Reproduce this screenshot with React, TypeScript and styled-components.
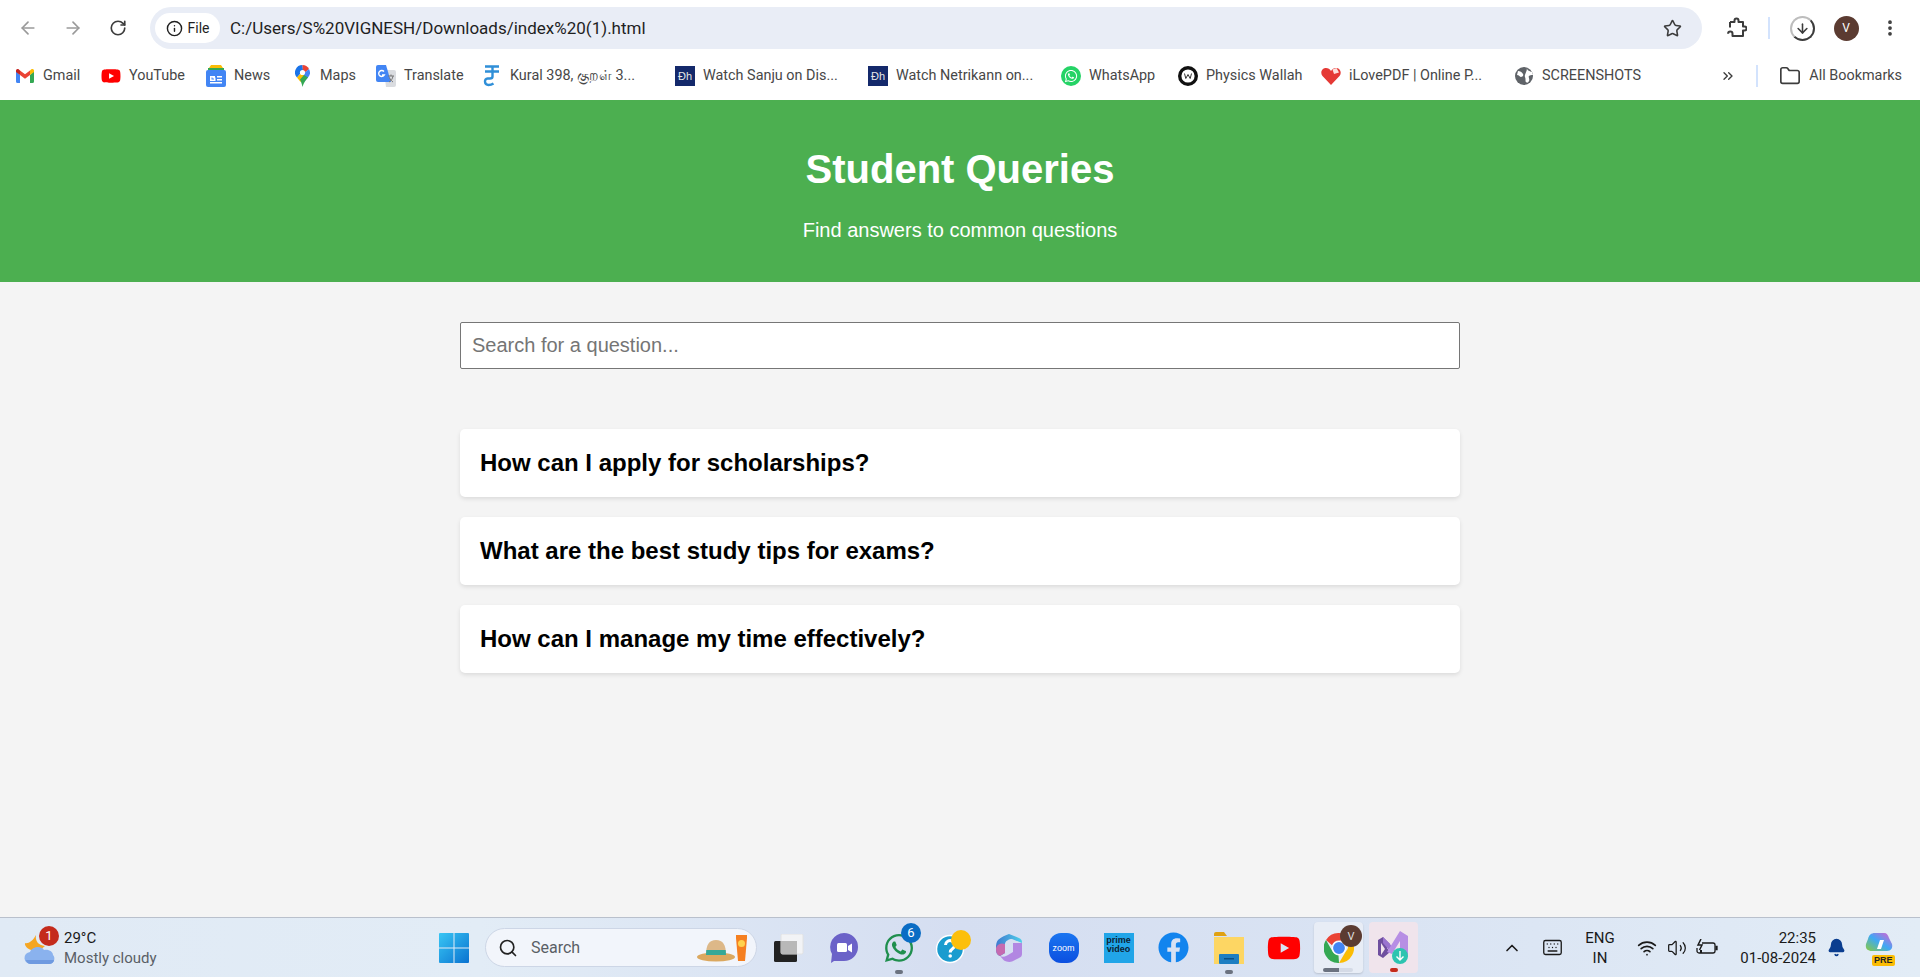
import styled, { createGlobalStyle } from "styled-components";
import {
  ArrowDown,
  ArrowLeft,
  ArrowRight,
  Bell,
  ChevronsRight,
  ChevronUp,
  EllipsisVertical,
  Folder,
  Info,
  Keyboard,
  RotateCw,
  Search,
  Star,
  Volume2,
  Wifi,
} from "lucide-react";
import { FaFacebook, FaWhatsapp, FaYoutube } from "react-icons/fa";

const GlobalStyle = createGlobalStyle`
  html, body {
    margin: 0;
    padding: 0;
    height: 100%;
    overflow: hidden;
    font-family: "Liberation Sans", Arial, sans-serif;
  }
  #root { height: 100%; }
  * { box-sizing: border-box; }
`;

const UI_FONT = `Roboto, "Noto Sans", sans-serif`;

const GmailIcon = () => (
  <svg width="18" height="14" viewBox="0 0 18 14">
    <path d="M0 2v10.5A1.5 1.5 0 0 0 1.5 14H4V6z" fill="#4285f4" />
    <path d="M18 2v10.5a1.5 1.5 0 0 1-1.5 1.5H14V6z" fill="#34a853" />
    <path d="M4 6 0 3V1.600C0 .3 1.500-.5 2.600.3L4 1.400z" fill="#c5221f" />
    <path d="M14 6V1.400L15.400.3C16.500-.5 18 .3 18 1.600V3z" fill="#fbbc04" />
    <path d="M4 6V1.400L9 5.200l5-3.800V6L9 9.800z" fill="#ea4335" />
  </svg>
);

const NewsIcon = () => (
  <svg width="20" height="22" viewBox="0 0 20 22">
    <path d="M3 3 5 0h10l2 3z" fill="#fbbc04" />
    <path d="M2 3h16v4H2z" fill="#34a853" />
    <rect y="5" width="20" height="17" rx="2" fill="#4285f4" />
    <path d="M4 11h5v1.400H5.500v2.200H8v-1H6.500v-1H9.500v3.400H4zM11 11h5v1.500h-5zM11 14h5v1.500h-5zM4 17h12v1.500H4z" fill="#fff" />
  </svg>
);

const MapsIcon = () => (
  <svg width="15" height="22" viewBox="0 0 15 22">
    <path d="M7.500 0A7.500 7.500 0 0 0 2 12.600l6-7z" fill="#1a73e8" />
    <path d="M7.500 0A7.500 7.500 0 0 1 14 4L8 9z" fill="#ea4335" />
    <path d="M14 4a7.500 7.500 0 0 1-1 8.500L9 17l-3-3 2-5z" fill="#4285f4" />
    <path d="M2 12.600 6 8l3 2-3.500 7z" fill="#fbbc04" />
    <path d="M5 14.500 9 10l4 2.600C11 15 8.600 17.600 7.500 22 7 19 6 17 5 14.500z" fill="#34a853" />
    <circle cx="7.500" cy="7.500" r="2.600" fill="#fff" />
  </svg>
);

const TranslateIcon = () => (
  <svg width="20" height="22" viewBox="0 0 20 22">
    <path d="M8 5h10a2 2 0 0 1 2 2v13a2 2 0 0 1-2 2H10z" fill="#dadce0" />
    <path d="M2 0h8l5 17H2a2 2 0 0 1-2-2V2a2 2 0 0 1 2-2z" fill="#4285f4" />
    <path d="M12 11h6M15 9.500V11M17 11c-.5 3-2 5-4 6M13.500 12.500c.6 2 2 3.600 3.500 4.500" stroke="#777" fill="none" />
    <path d="M8 6.500A3 3 0 1 0 8.300 10H6" stroke="#fff" strokeWidth="1.400" fill="none" />
  </svg>
);

const TamilIcon = () => (
  <svg width="18" height="22" viewBox="0 0 18 22">
    <path d="M2 1.500h14M2 6.500h14M9.500 1.500v10c0 1.500-1 2-2.500 2H4.500c-3.500 0-3.500 6.500 1 6.500 2 0 3.500-.5 5-1.500" stroke="#2f8fd8" strokeWidth="2.400" fill="none" />
  </svg>
);

const DisneyIcon = () => <DisneyTile>Ðh</DisneyTile>;

const ZoomIcon = () => <ZoomTile>zoom</ZoomTile>;

const WhatsAppBookmarkIcon = () => (
  <WhatsAppDisc>
    <FaWhatsapp size={14} color="#fff" />
  </WhatsAppDisc>
);

const PhysicsIcon = () => (
  <svg width="20" height="20" viewBox="0 0 20 20">
    <circle cx="10" cy="10" r="8.300" fill="#fff" stroke="#111" strokeWidth="3.400" />
    <path d="M6.500 7.500l1.300 5L10 8.500l2.200 4 1.300-5" stroke="#333" strokeWidth="1" fill="none" />
  </svg>
);

const HeartIcon = () => (
  <svg width="20" height="20" viewBox="0 0 20 20">
    <path d="M10 19 1.500 10C-1 7 .5 2 5 2c2 0 4 1 5 3 1-2 3-3 5-3 4.500 0 6 5 3.500 8z" fill="#e53935" />
    <path d="M11.500 3.500 15.500 2 18 6.500l-5 1.500z" fill="#fde0dc" />
  </svg>
);

const GlobeIcon = () => (
  <svg width="18" height="18" viewBox="0 0 18 18">
    <circle cx="9" cy="9" r="9" fill="#5f6368" />
    <path d="M3 4c2 0 4 1 5 3s-1 3-2 3-2-2-4-2zM12 1c0 3 3 3 5 4l1 3c-2 0-3 0-4 1s1 3 0 5-2 2-3 1 0-3-1-5 2-5 2-9z" fill="#fff" />
  </svg>
);

const PuzzleIcon = () => (
  <svg width="22" height="22" viewBox="0 0 22 22" fill="none" stroke="#3c3c3c" strokeWidth="2" strokeLinejoin="round">
    <path d="M4 5h4.500V3.500a2 2 0 0 1 4 0V5H17v4.500h1.500a2 2 0 0 1 0 4H17V19H6.500v-2.200a2.200 2.200 0 0 0-4.400 0" transform="translate(1 0)" />
    <path d="M5 5v5.500" />
  </svg>
);

const BatteryIcon = () => (
  <svg width="22" height="18" viewBox="0 0 22 18" fill="none" stroke="#1a1a1a" strokeWidth="1.300">
    <path d="M6 4h11a2 2 0 0 1 2 2v6a2 2 0 0 1-2 2H3a2 2 0 0 1-2-2V9" />
    <path d="M19.500 7.500H21v3h-1.500" fill="#1a1a1a" />
    <path d="M5 0 2 6h4l-2.500 5" strokeWidth="1.500" />
    <path d="M5 14v-3" strokeWidth="2" />
  </svg>
);

const WindowsIcon = () => (
  <svg width="30" height="30" viewBox="0 0 30 30">
    <defs>
      <linearGradient id="winGrad" x1="0" y1="0" x2="1" y2="1">
        <stop offset="0" stopColor="#38c6f4" />
        <stop offset="1" stopColor="#0a72d0" />
      </linearGradient>
    </defs>
    <path d="M0 1a1 1 0 0 1 1-1h13.500v14.500H0zM15.500 0H29a1 1 0 0 1 1 1v13.500H15.500zM0 15.500h14.500V30H1a1 1 0 0 1-1-1zM15.500 15.500H30V29a1 1 0 0 1-1 1H15.500z" fill="url(#winGrad)" />
  </svg>
);

const WeatherIcon = () => (
  <svg width="32" height="30" viewBox="0 0 32 30">
    <path d="M12 0c-1 6 2 10 9 11l-6 5C7 17 0 12 1 8c3 1 8-2 11-8z" fill="#f5a623" />
    <path d="M7 29a6 6 0 0 1-1-12c2-5 11-7 14-2 5-1 9 2 9 5 3 3 1 9-4 9z" fill="#8ab2ee" />
    <path d="M7 29h18c3 0 5-2 5-4H2c0 2 2 4 5 4z" fill="#6f9ae0" />
  </svg>
);

const HatIcon = () => (
  <svg width="50" height="28" viewBox="0 0 50 28">
    <ellipse cx="19" cy="23" rx="19" ry="4.500" fill="#dba85f" />
    <path d="M9 21C9 11 12 6 19 6s10 5 10 15z" fill="#ddb888" />
    <path d="M9.300 16h19.400l.3 5H9z" fill="#35a897" />
    <path d="M39 1h11v3l-2 23h-7L39 4z" fill="#f57f20" />
    <circle cx="44.500" cy="9.500" r="3.500" fill="#ffd24d" />
  </svg>
);

const StackedIcon = () => (
  <svg width="30" height="28" viewBox="0 0 30 28">
    <rect x="0" y="7" width="23" height="21" rx="1.500" fill="#222" />
    <rect x="7" y="0" width="22" height="20" rx="1.500" fill="#f6f6f6" fillOpacity="0.85" stroke="#e2e2e2" />
    <rect x="7" y="7" width="16" height="13" fill="#b8b8b8" />
  </svg>
);

const MeetIcon = () => (
  <svg width="30" height="30" viewBox="0 0 30 30">
    <path d="M15 0a14 14 0 0 1 0 28H5l-3 2 1-9A14 14 0 0 1 15 0z" fill="#6b62c8" />
    <rect x="8" y="10" width="10" height="9" rx="1.500" fill="#fff" />
    <path d="m19 13 4-2.500v9L19 17z" fill="#fff" />
  </svg>
);

const HelpIcon = () => (
  <svg width="36" height="36" viewBox="0 0 36 36">
    <circle cx="14" cy="19" r="13.500" fill="#1a9ccf" stroke="#fff" strokeWidth="1.500" />
    <path d="M9.500 15a4.500 4.500 0 1 1 7 3.800c-1.500 1-2.300 1.800-2.300 3.700" stroke="#fff" strokeWidth="3" fill="none" />
    <circle cx="14.200" cy="26" r="1.800" fill="#fff" />
    <circle cx="25" cy="10" r="10" fill="#fcbf0b" />
  </svg>
);

const M365Icon = () => (
  <svg width="26" height="28" viewBox="0 0 26 28">
    <defs>
      <linearGradient id="m365Top" x1="0" y1="0" x2="1" y2="0">
        <stop offset="0" stopColor="#3f7ad0" />
        <stop offset="1" stopColor="#4fd0ea" />
      </linearGradient>
    </defs>
    <path d="M13 0c-3 1-8 3-11 6C.5 8 0 10 0 14c0 5 1 7 4 8l5-3V10c0-3 4-5 7-5l10 4V8c0-2-1-3-3-4z" fill="url(#m365Top)" />
    <path d="M0 14c0 5 1 7 4 8l5-3v-9C6 9 2 9 0 14z" fill="#c56ab0" />
    <path d="M26 9v11c0 2-1 3-3 4l-7 3.500c-3 1-6 0-8-1L4 22c4 2 8-1 8-1l5-3V9z" fill="#b287e2" />
  </svg>
);

const PrimeIcon = () => (
  <PrimeTile>
    prime
    <br />
    video
  </PrimeTile>
);

const FilesIcon = () => (
  <svg width="30" height="32" viewBox="0 0 30 32">
    <path d="M0 2a2 2 0 0 1 2-2h8l3 4H0z" fill="#e0a112" />
    <path d="M0 5h30v27H0z" fill="#fdd663" />
    <rect x="5" y="22" width="20" height="10" rx="1" fill="#1d7ec2" />
    <rect x="10" y="26" width="10" height="1.500" fill="#0a4f85" />
  </svg>
);

const ChromeIcon = () => (
  <svg width="30" height="30" viewBox="0 0 30 30">
    <path d="M15 0a15 15 0 0 1 13 7.500H15a7.500 7.500 0 0 0-7 4.800L2 7A15 15 0 0 1 15 0z" fill="#ea4335" />
    <path d="M28 7.500A15 15 0 0 1 15 30l6.500-11a7.500 7.500 0 0 0 0-11.500z" fill="#fbbc04" />
    <path d="M15 30A15 15 0 0 1 2 7l6.500 11.500a7.500 7.500 0 0 0 6 4z" fill="#34a853" />
    <circle cx="15" cy="15" r="6.500" fill="#4285f4" stroke="#fff" strokeWidth="1.200" />
  </svg>
);

const VsIcon = () => (
  <svg width="32" height="34" viewBox="0 0 32 34">
    <path d="M0 9 5 6l7 7-3 4 3 4-7 6-5-3z" fill="#6f4f9f" />
    <path d="M3 12v12l4-6z" fill="#f0e4ec" />
    <path d="M5 6 12 13l2 3-3 3-6-7z" fill="#9a74cf" />
    <path d="M9 21 22 0l8 5v21l-8 3V10l-8 13z" fill="#b78ee4" />
    <circle cx="22" cy="25" r="8" fill="#2cc4b0" />
    <path d="M22 20v9M18.500 25.500 22 29l3.500-3.500" stroke="#fff" strokeWidth="1.400" fill="none" />
  </svg>
);

const CopilotIcon = () => (
  <svg width="30" height="30" viewBox="0 0 30 30">
    <defs>
      <linearGradient id="copilotGrad" x1="0" y1="1" x2="1" y2="0">
        <stop offset="0" stopColor="#8acb3c" />
        <stop offset="0.5" stopColor="#3fa9f5" />
        <stop offset="1" stopColor="#e45ccf" />
      </linearGradient>
    </defs>
    <path d="M11 0h9c3 0 4 2 5 5l3 6c1 4-1 7-5 7H8c-4 0-7-2-6-7l2-5c1-4 3-6 7-6z" fill="url(#copilotGrad)" />
    <path d="M16 7h4l-3 9h-4z" fill="#fff" />
  </svg>
);

const BOOKMARKS = [
  { label: "Gmail", width: 86, icon: <GmailIcon /> },
  { label: "YouTube", width: 105, icon: <FaYoutube size={22} color="#f00" /> },
  { label: "News", width: 86, icon: <NewsIcon /> },
  { label: "Maps", width: 84, icon: <MapsIcon /> },
  { label: "Translate", width: 106, icon: <TranslateIcon /> },
  { label: "Kural 398, குறள் 3...", width: 193, icon: <TamilIcon /> },
  { label: "Watch Sanju on Dis...", width: 193, icon: <DisneyIcon /> },
  { label: "Watch Netrikann on...", width: 193, icon: <DisneyIcon /> },
  { label: "WhatsApp", width: 117, icon: <WhatsAppBookmarkIcon /> },
  { label: "Physics Wallah", width: 143, icon: <PhysicsIcon /> },
  { label: "iLovePDF | Online P...", width: 193, icon: <HeartIcon /> },
  { label: "SCREENSHOTS", width: 130, icon: <GlobeIcon /> },
];

const QUESTIONS = [
  "How can I apply for scholarships?",
  "What are the best study tips for exams?",
  "How can I manage my time effectively?",
];

const TASK_APPS = [
  { key: "stacked", icon: <StackedIcon /> },
  { key: "meet", icon: <MeetIcon /> },
  {
    key: "whatsapp",
    icon: <FaWhatsapp size={32} color="#1f8f4e" />,
    count: "6",
    running: true,
  },
  { key: "help", icon: <HelpIcon /> },
  { key: "m365", icon: <M365Icon /> },
  { key: "zoom", icon: <ZoomIcon /> },
  { key: "prime", icon: <PrimeIcon /> },
  { key: "facebook", icon: <FaFacebook size={31} color="#1284ee" /> },
  { key: "files", icon: <FilesIcon />, running: true },
  { key: "youtube", icon: <FaYoutube size={34} color="#f00" /> },
];

const App = () => {
  return (
    <Page>
      <GlobalStyle />
      <Toolbar>
        <NavButton $dim>
          <ArrowLeft size={20} strokeWidth={2} />
        </NavButton>
        <NavButton $dim>
          <ArrowRight size={20} strokeWidth={2} />
        </NavButton>
        <NavButton>
          <RotateCw size={18} strokeWidth={2.2} />
        </NavButton>
        <Omnibox>
          <FileChip>
            <Info size={17} strokeWidth={2} />
            File
          </FileChip>
          <Url>C:/Users/S%20VIGNESH/Downloads/index%20(1).html</Url>
          <Star size={19} strokeWidth={2} color="#3c3c3c" />
        </Omnibox>
        <ToolSlot>
          <PuzzleIcon />
        </ToolSlot>
        <ToolDivider />
        <ToolSlot>
          <DownloadRing>
            <ArrowDown size={15} strokeWidth={2.5} color="#3c3c3c" />
          </DownloadRing>
        </ToolSlot>
        <ToolSlot>
          <Avatar>V</Avatar>
        </ToolSlot>
        <ToolSlot>
          <EllipsisVertical size={20} strokeWidth={2.5} color="#3c3c3c" />
        </ToolSlot>
      </Toolbar>

      <BookmarkBar>
        {BOOKMARKS.map((bookmark) => (
          <Bookmark key={bookmark.label} $width={bookmark.width}>
            <BookmarkIcon>{bookmark.icon}</BookmarkIcon>
            {bookmark.label}
          </Bookmark>
        ))}
        <BookmarkEnd>
          <ChevronsRight size={16} strokeWidth={2} color="#3c3c3c" />
          <BookmarkDivider />
          <AllBookmarks>
            <Folder size={22} strokeWidth={1.8} color="#3c3c3c" />
            All Bookmarks
          </AllBookmarks>
        </BookmarkEnd>
      </BookmarkBar>

      <Header>
        <Title>Student Queries</Title>
        <Subtitle>Find answers to common questions</Subtitle>
      </Header>

      <Main>
        <SearchInput placeholder="Search for a question..." />
        <QuestionList>
          {QUESTIONS.map((question) => (
            <QuestionCard key={question}>{question}</QuestionCard>
          ))}
        </QuestionList>
      </Main>

      <Taskbar>
        <Weather>
          <WeatherGlyph>
            <WeatherIcon />
            <WeatherBadge>1</WeatherBadge>
          </WeatherGlyph>
          <WeatherText>
            <span>29°C</span>
            <WeatherCaption>Mostly cloudy</WeatherCaption>
          </WeatherText>
        </Weather>

        <TaskCenter>
          <TaskSlot>
            <WindowsIcon />
          </TaskSlot>
          <TaskSearch>
            <Search size={20} strokeWidth={2} color="#222" />
            <TaskSearchLabel>Search</TaskSearchLabel>
            <HatIcon />
          </TaskSearch>
          {TASK_APPS.map((app) => (
            <TaskSlot key={app.key}>
              {app.icon}
              {app.count && <CountBadge>{app.count}</CountBadge>}
              {app.running && <RunDot />}
            </TaskSlot>
          ))}
          <ActiveTile>
            <ChromeIcon />
            <ChromeBadge>V</ChromeBadge>
            <ProgressTrack />
          </ActiveTile>
          <ActiveTile $alert>
            <VsIcon />
            <AlertDot />
          </ActiveTile>
        </TaskCenter>

        <Tray>
          <TrayIcon $width={40}>
            <ChevronUp size={20} strokeWidth={2} />
          </TrayIcon>
          <TrayIcon $width={40}>
            <Keyboard size={21} strokeWidth={1.5} />
          </TrayIcon>
          <Language>
            ENG
            <br />
            IN
          </Language>
          <TrayIcon $width={32}>
            <Wifi size={20} strokeWidth={2} />
          </TrayIcon>
          <TrayIcon $width={28}>
            <Volume2 size={20} strokeWidth={1.5} />
          </TrayIcon>
          <TrayIcon $width={32}>
            <BatteryIcon />
          </TrayIcon>
          <Clock>
            <span>22:35</span>
            <span>01-08-2024</span>
          </Clock>
          <TrayIcon $width={38}>
            <Bell size={19} fill="#0a3d8f" color="#0a3d8f" />
          </TrayIcon>
          <CopilotSlot>
            <CopilotIcon />
            <PreTag>PRE</PreTag>
          </CopilotSlot>
        </Tray>
      </Taskbar>
    </Page>
  );
};

export default App;

const Page = styled.div`
  height: 100%;
  display: flex;
  flex-direction: column;
  background: #f4f4f4;
`;

const Toolbar = styled.div`
  height: 55px;
  flex-shrink: 0;
  display: flex;
  align-items: center;
  padding: 1px 8px 0 5px;
  background: #fff;
`;

const NavButton = styled.div<{ $dim?: boolean }>`
  width: 45px;
  height: 36px;
  display: flex;
  align-items: center;
  justify-content: center;
  color: ${(p) => (p.$dim ? "#9a9a9a" : "#3c3c3c")};
`;

const Omnibox = styled.div`
  flex: 1;
  height: 42px;
  margin: 0 12px 0 10px;
  display: flex;
  align-items: center;
  padding: 0 20px 0 5px;
  border-radius: 21px;
  background: #e9edf6;
`;

const FileChip = styled.div`
  height: 30px;
  width: 65px;
  display: flex;
  align-items: center;
  justify-content: center;
  gap: 5px;
  border-radius: 15px;
  background: #fff;
  color: #1f1f1f;
  font: 400 14px ${UI_FONT};
`;

const Url = styled.div`
  flex: 1;
  margin-left: 10px;
  color: #1f1f1f;
  font: 400 17px ${UI_FONT};
`;

const ToolSlot = styled.div`
  width: 44px;
  height: 36px;
  display: flex;
  align-items: center;
  justify-content: center;
`;

const ToolDivider = styled.div`
  width: 2px;
  height: 22px;
  margin: 0 10px;
  background: #d3e3fd;
`;

const BookmarkDivider = styled(ToolDivider)`
  margin: 0 21px 0 20px;
`;

const DownloadRing = styled.div`
  width: 25px;
  height: 25px;
  display: flex;
  align-items: center;
  justify-content: center;
  border-radius: 50%;
  border: 2px solid #3c3c3c;
  border-left-color: #bdbdbd;
  border-top-color: #bdbdbd;
`;

const Avatar = styled.div`
  width: 25px;
  height: 25px;
  display: flex;
  align-items: center;
  justify-content: center;
  border-radius: 50%;
  background: #5b3b31;
  color: #fff;
  font: 400 12px ${UI_FONT};
`;

const BookmarkBar = styled.div`
  height: 45px;
  flex-shrink: 0;
  display: flex;
  align-items: center;
  padding: 0 18px 4px 15px;
  background: #fff;
`;

const Bookmark = styled.div<{ $width: number }>`
  width: ${(p) => p.$width}px;
  flex-shrink: 0;
  display: flex;
  align-items: center;
  gap: 8px;
  color: #474747;
  white-space: nowrap;
  font: 400 14.4px ${UI_FONT}, "Noto Sans CJK SC";
`;

const BookmarkIcon = styled.span`
  width: 20px;
  height: 22px;
  flex-shrink: 0;
  display: flex;
  align-items: center;
  justify-content: center;
`;

const DisneyTile = styled.span`
  width: 20px;
  height: 20px;
  display: flex;
  align-items: center;
  justify-content: center;
  background: #14296b;
  color: #e6e6e6;
  font: 400 11px "Liberation Sans", sans-serif;
`;

const WhatsAppDisc = styled.span`
  width: 20px;
  height: 20px;
  display: flex;
  align-items: center;
  justify-content: center;
  border-radius: 50%;
  background: #25d366;
`;

const BookmarkEnd = styled.div`
  margin-left: auto;
  display: flex;
  align-items: center;
`;

const AllBookmarks = styled.div`
  display: flex;
  align-items: center;
  gap: 8px;
  color: #474747;
  font: 400 14.4px ${UI_FONT};
`;

const Header = styled.header`
  height: 182px;
  flex-shrink: 0;
  display: flex;
  flex-direction: column;
  align-items: center;
  background: #4caf50;
  color: #fff;
`;

const Title = styled.h1`
  margin: 46px 0 0;
  font-size: 40px;
  line-height: 46px;
  font-weight: 700;
`;

const Subtitle = styled.p`
  margin: 27px 0 0;
  font-size: 20px;
  line-height: 23px;
`;

const Main = styled.main`
  flex: 1;
  display: flex;
  flex-direction: column;
  align-items: center;
  padding-top: 40px;
`;

const SearchInput = styled.input`
  width: 1000px;
  height: 47px;
  padding: 0 11px;
  border: 1px solid #767676;
  border-radius: 2px;
  outline: none;
  background: #fff;
  font-family: "Liberation Sans", Arial, sans-serif;
  font-size: 20px;

  &::placeholder {
    color: #757575;
  }
`;

const QuestionList = styled.div`
  width: 1000px;
  margin-top: 60px;
  display: flex;
  flex-direction: column;
  gap: 20px;
`;

const QuestionCard = styled.h3`
  height: 68px;
  margin: 0;
  display: flex;
  align-items: center;
  padding: 0 20px;
  border-radius: 5px;
  background: #fff;
  box-shadow: 0 2px 4px rgba(0, 0, 0, 0.1);
  color: #000;
  font-size: 24px;
  font-weight: 700;
`;

const Taskbar = styled.footer`
  height: 60px;
  flex-shrink: 0;
  display: flex;
  align-items: center;
  border-top: 1px solid #b9c0cc;
  background: linear-gradient(90deg, #e0eaf5 0%, #e2ecf6 25%, #d5def1 50%, #d9e3f3 70%, #e2ecf6 100%);
`;

const Weather = styled.div`
  width: 426px;
  flex-shrink: 0;
  display: flex;
  align-items: center;
  gap: 8px;
  padding-left: 24px;
`;

const WeatherGlyph = styled.div`
  position: relative;
  width: 32px;
  height: 30px;
  margin-top: 4px;
`;

const WeatherBadge = styled.span`
  position: absolute;
  top: -9px;
  left: 15px;
  width: 20px;
  height: 20px;
  display: flex;
  align-items: center;
  justify-content: center;
  border-radius: 50%;
  background: #c42b1c;
  color: #fff;
  font: 400 13px ${UI_FONT};
`;

const WeatherText = styled.div`
  display: flex;
  flex-direction: column;
  gap: 2px;
  color: #1a1a1a;
  font: 400 15px/18px ${UI_FONT};
`;

const WeatherCaption = styled.span`
  color: #5a5f66;
`;

const TaskCenter = styled.div`
  display: flex;
  align-items: center;
`;

const TaskSlot = styled.div`
  position: relative;
  width: 55px;
  height: 50px;
  display: flex;
  align-items: center;
  justify-content: center;
`;

const TaskSearch = styled.div`
  width: 272px;
  height: 39px;
  margin: 0 4px 0 4px;
  display: flex;
  align-items: center;
  gap: 13px;
  padding: 0 9px 0 12px;
  border: 1px solid #cdd6e6;
  border-radius: 20px;
  background: #f2f5fb;
`;

const TaskSearchLabel = styled.span`
  flex: 1;
  color: #5a5f66;
  font: 400 16px ${UI_FONT};
`;

const CountBadge = styled.span`
  position: absolute;
  top: 0;
  right: 5px;
  width: 20px;
  height: 20px;
  display: flex;
  align-items: center;
  justify-content: center;
  border-radius: 50%;
  background: #0a6cc4;
  color: #fff;
  font: 400 13px ${UI_FONT};
`;

const RunDot = styled.span`
  position: absolute;
  bottom: -1px;
  left: 50%;
  width: 8px;
  height: 4px;
  margin-left: -4px;
  border-radius: 2px;
  background: #6b7280;
`;

const ZoomTile = styled.div`
  width: 30px;
  height: 30px;
  display: flex;
  align-items: center;
  justify-content: center;
  border-radius: 12px;
  background: linear-gradient(180deg, #1a75f0, #0b4fe0);
  color: #fff;
  font: 400 9px "Liberation Sans", sans-serif;
`;

const PrimeTile = styled.div`
  width: 30px;
  height: 30px;
  display: flex;
  align-items: center;
  justify-content: center;
  padding-bottom: 6px;
  background: #21a5e8;
  color: #0c2233;
  text-align: center;
  font: 700 9px/9px "Liberation Sans", sans-serif;
`;

const ActiveTile = styled.div<{ $alert?: boolean }>`
  position: relative;
  width: 49px;
  height: 51px;
  margin: 0 3px;
  display: flex;
  align-items: center;
  justify-content: center;
  border-radius: 4px;
  background: ${(p) => (p.$alert ? "#f0e4ec" : "#e8edf6")};
  box-shadow: ${(p) => (p.$alert ? "none" : "0 1px 2px rgba(0, 0, 0, 0.15)")};
`;

const ChromeBadge = styled.span`
  position: absolute;
  top: 3px;
  right: 1px;
  width: 22px;
  height: 22px;
  display: flex;
  align-items: center;
  justify-content: center;
  border-radius: 50%;
  background: #5b3b31;
  color: #ddd;
  font: 400 11px ${UI_FONT};
`;

const ProgressTrack = styled.span`
  position: absolute;
  bottom: 1px;
  left: 9px;
  width: 30px;
  height: 4px;
  border-radius: 2px;
  background: linear-gradient(90deg, #6b7280 55%, #d4dae6 55%);
`;

const AlertDot = styled.span`
  position: absolute;
  bottom: 1px;
  left: 50%;
  width: 8px;
  height: 4px;
  margin-left: -4px;
  border-radius: 2px;
  background: #c42b1c;
`;

const Tray = styled.div`
  margin-left: auto;
  display: flex;
  align-items: center;
  padding-right: 26px;
  color: #1a1a1a;
`;

const TrayIcon = styled.div<{ $width: number }>`
  width: ${(p) => p.$width}px;
  display: flex;
  align-items: center;
  justify-content: center;
`;

const Language = styled.div`
  width: 56px;
  margin-right: 3px;
  text-align: center;
  font: 400 15px/20px ${UI_FONT};
`;

const Clock = styled.div`
  width: 93px;
  margin-right: 1px;
  display: flex;
  flex-direction: column;
  align-items: flex-end;
  gap: 2px;
  font: 400 15px/18px ${UI_FONT};
`;

const CopilotSlot = styled.div`
  position: relative;
  width: 30px;
  height: 30px;
  margin-left: 9px;
`;

const PreTag = styled.span`
  position: absolute;
  left: 8px;
  bottom: -3px;
  padding: 0 2px;
  border-radius: 2px;
  background: #fbbc04;
  color: #222;
  font: 700 9px/11px "Liberation Sans", sans-serif;
`;
